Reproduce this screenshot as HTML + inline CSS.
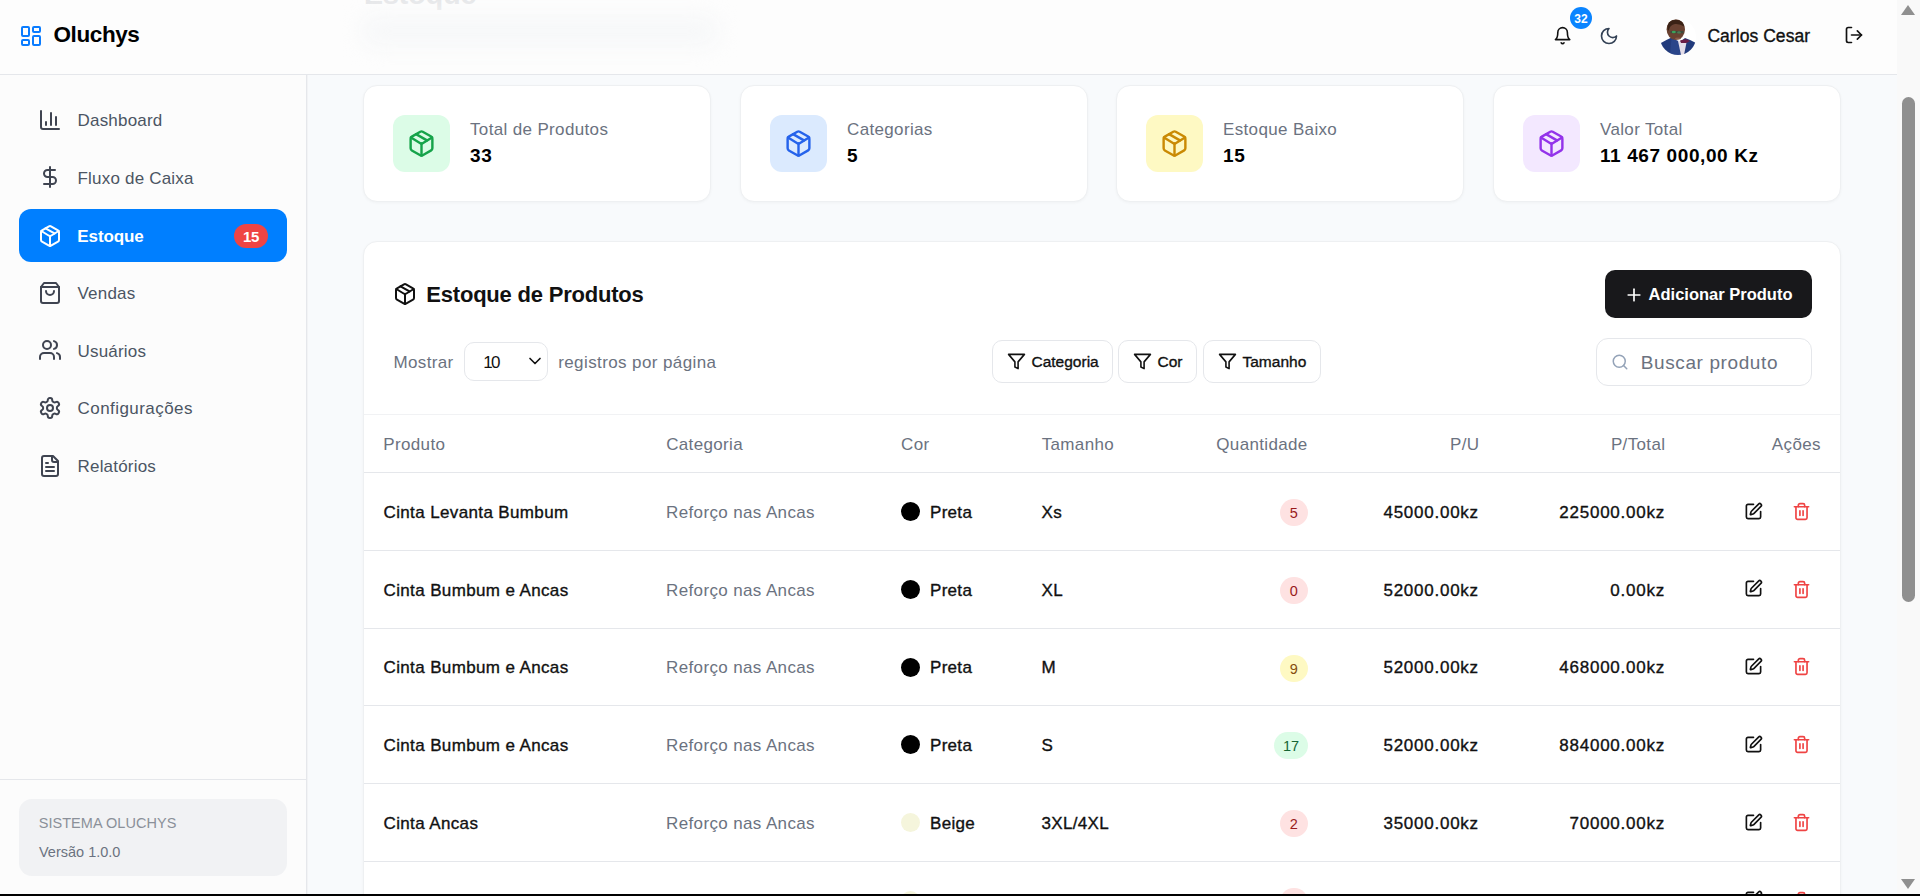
<!DOCTYPE html>
<html><head><meta charset="utf-8">
<style>
*{box-sizing:border-box;margin:0;padding:0}
html,body{width:1920px;height:896px;overflow:hidden}
body{position:relative;background:#f8fafc;font-family:"Liberation Sans",sans-serif;color:#111}
.t{position:absolute;white-space:nowrap;line-height:1}
.r{position:absolute}
.m{-webkit-text-stroke:0.35px currentColor}
svg{fill:none;stroke:currentColor;stroke-linecap:round;stroke-linejoin:round}
</style></head><body>
<div class="r" style="left:0px;top:0px;width:1897px;height:74px;background:#fdfdfd;"></div>
<div class="r" style="left:0px;top:74px;width:1897px;height:1px;background:#e5e7eb;"></div>
<div class="t" style="top:-20.13px;font-size:28.5px;color:#e6e7e9;font-weight:700;left:364px;">Estoque</div>
<div class="r" style="left:360px;top:14px;width:360px;height:34px;border-radius:17px;background:#f7f8f9;filter:blur(10px)"></div>
<svg class="r" style="left:19px;top:24px;color:#0a7cff" width="24" height="24" viewBox="0 0 24 24" stroke-width="2"><rect width="7" height="9" x="3" y="3" rx="1"/><rect width="7" height="5" x="14" y="3" rx="1"/><rect width="7" height="9" x="14" y="12" rx="1"/><rect width="7" height="5" x="3" y="16" rx="1"/></svg>
<div class="t" style="top:24.45px;font-size:22.5px;color:#000;font-weight:700;letter-spacing:-0.4px;left:53.5px;">Oluchys</div>
<svg class="r" style="left:1552.9px;top:25.9px;color:#111" width="19.2" height="19.2" viewBox="0 0 24 24" stroke-width="2"><path d="M6 8a6 6 0 0 1 12 0c0 7 3 9 3 9H3s3-2 3-9"/><path d="M10.3 21a1.94 1.94 0 0 0 3.4 0"/></svg>
<div class="r" style="left:1570px;top:7px;width:22px;height:22px;background:#0a84ff;border-radius:11px;"></div>
<div class="t" style="top:12.54px;font-size:12px;color:#fff;font-weight:700;left:1581px;transform:translateX(-50%);">32</div>
<svg class="r" style="left:1598.5px;top:25.5px;color:#334155" width="20" height="20" viewBox="0 0 24 24" stroke-width="2"><path d="M12 3a6 6 0 0 0 9 9 9 9 0 1 1-9-9Z"/></svg>
<svg class="r" style="left:1660px;top:18.8px" width="36" height="36" viewBox="0 0 36 36">
<defs><clipPath id="av"><circle cx="18" cy="18" r="18"/></clipPath><filter id="bl"><feGaussianBlur stdDeviation="0.5"/></filter></defs>
<g clip-path="url(#av)" style="stroke:none">
<rect width="36" height="36" fill="#fff"/>
<g filter="url(#bl)">
<path d="M0 24.5 Q6 21 11.5 18.5 L16 22 L21 22 L25 19 Q31 21 36 24 L36 36 L0 36Z" fill="#243b7c"/>
<path d="M13 19.5 L21.5 22.5 L27 21 L24 36 L19 36Z" fill="#e4dde8"/>
<path d="M11.5 18.5 L18 22 L21 36 L10 36Z" fill="#2a448a"/>
<path d="M20 21.5 L26 20 L30 22 L26.5 24 L21 24Z" fill="#6a1f45"/>
<ellipse cx="15.8" cy="10.6" rx="9.2" ry="10.4" fill="#6a4232"/>
<path d="M7.4 10 Q6.8 1 15.5 0.8 Q23.5 1 24 7.5 Q20 4.5 15 5 Q10 5.5 8.5 12Z" fill="#3a2418"/>
<rect x="10.5" y="12" width="13" height="2.2" fill="#3c4a3c"/>
<ellipse cx="13.8" cy="13" rx="2" ry="1.3" fill="#3aa35a"/>
<ellipse cx="19" cy="13.4" rx="1.8" ry="1.2" fill="#4f7a55"/>
<ellipse cx="18" cy="19.5" rx="3" ry="1" fill="#8a5a48"/>
</g>
</g></svg>
<div class="t m" style="top:28.29px;font-size:17.5px;color:#111;letter-spacing:0.05px;left:1707.4px;">Carlos Cesar</div>
<svg class="r" style="left:1843.6px;top:25.3px;color:#111" width="20" height="20" viewBox="0 0 24 24" stroke-width="2"><path d="M9 21H5a2 2 0 0 1-2-2V5a2 2 0 0 1 2-2h4"/><polyline points="16 17 21 12 16 7"/><line x1="21" x2="9" y1="12" y2="12"/></svg>
<div class="r" style="left:0px;top:75px;width:306px;height:821px;background:#fcfcfc;"></div>
<div class="r" style="left:306px;top:75px;width:1px;height:821px;background:#e5e7eb;"></div>
<div class="r" style="left:307px;top:75px;width:1px;height:821px;background:#f2f3f5;"></div>
<svg class="r" style="left:38px;top:107.74000000000001px;color:#3f4451" width="24" height="24" viewBox="0 0 24 24" stroke-width="2"><path d="M3 3v16a2 2 0 0 0 2 2h16"/><path d="M18 17V9"/><path d="M13 17V5"/><path d="M8 17v-3"/></svg>
<div class="t" style="top:112.06px;font-size:17px;color:#4b5563;letter-spacing:0.2px;left:77.5px;">Dashboard</div>
<svg class="r" style="left:38px;top:165.37px;color:#3f4451" width="24" height="24" viewBox="0 0 24 24" stroke-width="2"><line x1="12" x2="12" y1="2" y2="22"/><path d="M17 5H9.5a3.5 3.5 0 0 0 0 7h5a3.5 3.5 0 0 1 0 7H6"/></svg>
<div class="t" style="top:169.68px;font-size:17px;color:#4b5563;letter-spacing:0.2px;left:77.5px;">Fluxo de Caixa</div>
<div class="r" style="left:19px;top:209px;width:268px;height:53px;background:#007fff;border-radius:12px;"></div>
<svg class="r" style="left:38px;top:224.10000000000002px;color:#ffffff" width="24" height="24" viewBox="0 0 24 24" stroke-width="2"><path d="M11 21.73a2 2 0 0 0 2 0l7-4A2 2 0 0 0 21 16V8a2 2 0 0 0-1-1.73l-7-4a2 2 0 0 0-2 0l-7 4A2 2 0 0 0 3 8v8a2 2 0 0 0 1 1.73z"/><path d="M12 22V12"/><path d="m3.3 7 7.703 4.734a2 2 0 0 0 1.994 0L20.7 7"/><path d="m7.5 4.27 9 5.15"/></svg>
<div class="t" style="top:227.71px;font-size:17px;color:#fff;font-weight:700;letter-spacing:-0.1px;left:77.3px;">Estoque</div>
<div class="r" style="left:234px;top:224px;width:34px;height:24px;background:#ef4444;border-radius:12px;"></div>
<div class="t" style="top:228.50px;font-size:15px;color:#fff;font-weight:700;letter-spacing:-0.3px;left:251px;transform:translateX(-50%);padding-left:-0.3px;">15</div>
<svg class="r" style="left:38px;top:280.63px;color:#3f4451" width="24" height="24" viewBox="0 0 24 24" stroke-width="2"><path d="M6 2 3 6v14a2 2 0 0 0 2 2h14a2 2 0 0 0 2-2V6l-3-4Z"/><path d="M3 6h18"/><path d="M16 10a4 4 0 0 1-8 0"/></svg>
<div class="t" style="top:284.92px;font-size:17px;color:#4b5563;letter-spacing:0.2px;left:77.5px;">Vendas</div>
<svg class="r" style="left:38px;top:338.26px;color:#3f4451" width="24" height="24" viewBox="0 0 24 24" stroke-width="2"><path d="M16 21v-2a4 4 0 0 0-4-4H6a4 4 0 0 0-4 4v2"/><circle cx="9" cy="7" r="4"/><path d="M22 21v-2a4 4 0 0 0-3-3.87"/><path d="M16 3.13a4 4 0 0 1 0 7.75"/></svg>
<div class="t" style="top:342.54px;font-size:17px;color:#4b5563;letter-spacing:0.2px;left:77.5px;">Usuários</div>
<svg class="r" style="left:38px;top:395.89000000000004px;color:#3f4451" width="24" height="24" viewBox="0 0 24 24" stroke-width="2"><path d="M12.22 2h-.44a2 2 0 0 0-2 2v.18a2 2 0 0 1-1 1.73l-.43.25a2 2 0 0 1-2 0l-.15-.08a2 2 0 0 0-2.73.73l-.22.38a2 2 0 0 0 .73 2.73l.15.1a2 2 0 0 1 1 1.72v.51a2 2 0 0 1-1 1.74l-.15.09a2 2 0 0 0-.73 2.73l.22.38a2 2 0 0 0 2.73.73l.15-.08a2 2 0 0 1 2 0l.43.25a2 2 0 0 1 1 1.73V20a2 2 0 0 0 2 2h.44a2 2 0 0 0 2-2v-.18a2 2 0 0 1 1-1.73l.43-.25a2 2 0 0 1 2 0l.15.08a2 2 0 0 0 2.73-.73l.22-.39a2 2 0 0 0-.73-2.73l-.15-.08a2 2 0 0 1-1-1.74v-.5a2 2 0 0 1 1-1.74l.15-.09a2 2 0 0 0 .73-2.73l-.22-.38a2 2 0 0 0-2.73-.73l-.15.08a2 2 0 0 1-2 0l-.43-.25a2 2 0 0 1-1-1.73V4a2 2 0 0 0-2-2z"/><circle cx="12" cy="12" r="3"/></svg>
<div class="t" style="top:400.16px;font-size:17px;color:#4b5563;letter-spacing:0.45px;left:77.5px;">Configurações</div>
<svg class="r" style="left:38px;top:453.52000000000004px;color:#3f4451" width="24" height="24" viewBox="0 0 24 24" stroke-width="2"><path d="M15 2H6a2 2 0 0 0-2 2v16a2 2 0 0 0 2 2h12a2 2 0 0 0 2-2V7Z"/><path d="M14 2v4a2 2 0 0 0 2 2h4"/><path d="M10 9H8"/><path d="M16 13H8"/><path d="M16 17H8"/></svg>
<div class="t" style="top:457.78px;font-size:17px;color:#4b5563;letter-spacing:0.2px;left:77.5px;">Relatórios</div>
<div class="r" style="left:0px;top:779px;width:306px;height:1px;background:#e5e7eb;"></div>
<div class="r" style="left:19px;top:799px;width:268px;height:77px;background:#f1f2f4;border-radius:13px;"></div>
<div class="t" style="top:815.73px;font-size:14.5px;color:#8b9099;letter-spacing:0.05px;left:38.7px;">SISTEMA OLUCHYS</div>
<div class="t" style="top:845.03px;font-size:14.5px;color:#6b7280;left:39px;">Versão 1.0.0</div>
<div class="r" style="left:363px;top:85px;width:348px;height:117px;background:#fff;border-radius:14px;border:1px solid #eef0f2;box-shadow:0 1px 3px rgba(0,0,0,0.035)"></div>
<div class="r" style="left:393px;top:114.6px;width:57px;height:57px;background:#dcfce7;border-radius:12px;"></div>
<svg class="r" style="left:406.6px;top:128.8px;color:#16a34a" width="29" height="29" viewBox="0 0 24 24" stroke-width="2"><path d="M11 21.73a2 2 0 0 0 2 0l7-4A2 2 0 0 0 21 16V8a2 2 0 0 0-1-1.73l-7-4a2 2 0 0 0-2 0l-7 4A2 2 0 0 0 3 8v8a2 2 0 0 0 1 1.73z"/><path d="M12 22V12"/><path d="m3.3 7 7.703 4.734a2 2 0 0 0 1.994 0L20.7 7"/><path d="m7.5 4.27 9 5.15"/></svg>
<div class="t" style="top:121.21px;font-size:17px;color:#6b7280;letter-spacing:0.35px;left:470px;">Total de Produtos</div>
<div class="t" style="top:145.52px;font-size:19px;color:#000;font-weight:700;letter-spacing:0.6px;left:470px;">33</div>
<div class="r" style="left:740px;top:85px;width:348px;height:117px;background:#fff;border-radius:14px;border:1px solid #eef0f2;box-shadow:0 1px 3px rgba(0,0,0,0.035)"></div>
<div class="r" style="left:770px;top:114.6px;width:57px;height:57px;background:#dbeafe;border-radius:12px;"></div>
<svg class="r" style="left:783.6px;top:128.8px;color:#2563eb" width="29" height="29" viewBox="0 0 24 24" stroke-width="2"><path d="M11 21.73a2 2 0 0 0 2 0l7-4A2 2 0 0 0 21 16V8a2 2 0 0 0-1-1.73l-7-4a2 2 0 0 0-2 0l-7 4A2 2 0 0 0 3 8v8a2 2 0 0 0 1 1.73z"/><path d="M12 22V12"/><path d="m3.3 7 7.703 4.734a2 2 0 0 0 1.994 0L20.7 7"/><path d="m7.5 4.27 9 5.15"/></svg>
<div class="t" style="top:121.21px;font-size:17px;color:#6b7280;letter-spacing:0.35px;left:847px;">Categorias</div>
<div class="t" style="top:145.52px;font-size:19px;color:#000;font-weight:700;letter-spacing:0.6px;left:847px;">5</div>
<div class="r" style="left:1116px;top:85px;width:348px;height:117px;background:#fff;border-radius:14px;border:1px solid #eef0f2;box-shadow:0 1px 3px rgba(0,0,0,0.035)"></div>
<div class="r" style="left:1146px;top:114.6px;width:57px;height:57px;background:#fef9c3;border-radius:12px;"></div>
<svg class="r" style="left:1159.6px;top:128.8px;color:#ca8a04" width="29" height="29" viewBox="0 0 24 24" stroke-width="2"><path d="M11 21.73a2 2 0 0 0 2 0l7-4A2 2 0 0 0 21 16V8a2 2 0 0 0-1-1.73l-7-4a2 2 0 0 0-2 0l-7 4A2 2 0 0 0 3 8v8a2 2 0 0 0 1 1.73z"/><path d="M12 22V12"/><path d="m3.3 7 7.703 4.734a2 2 0 0 0 1.994 0L20.7 7"/><path d="m7.5 4.27 9 5.15"/></svg>
<div class="t" style="top:121.21px;font-size:17px;color:#6b7280;letter-spacing:0.35px;left:1223px;">Estoque Baixo</div>
<div class="t" style="top:145.52px;font-size:19px;color:#000;font-weight:700;letter-spacing:0.6px;left:1223px;">15</div>
<div class="r" style="left:1493px;top:85px;width:348px;height:117px;background:#fff;border-radius:14px;border:1px solid #eef0f2;box-shadow:0 1px 3px rgba(0,0,0,0.035)"></div>
<div class="r" style="left:1523px;top:114.6px;width:57px;height:57px;background:#f3e8ff;border-radius:12px;"></div>
<svg class="r" style="left:1536.6px;top:128.8px;color:#9333ea" width="29" height="29" viewBox="0 0 24 24" stroke-width="2"><path d="M11 21.73a2 2 0 0 0 2 0l7-4A2 2 0 0 0 21 16V8a2 2 0 0 0-1-1.73l-7-4a2 2 0 0 0-2 0l-7 4A2 2 0 0 0 3 8v8a2 2 0 0 0 1 1.73z"/><path d="M12 22V12"/><path d="m3.3 7 7.703 4.734a2 2 0 0 0 1.994 0L20.7 7"/><path d="m7.5 4.27 9 5.15"/></svg>
<div class="t" style="top:121.21px;font-size:17px;color:#6b7280;letter-spacing:0.35px;left:1600px;">Valor Total</div>
<div class="t" style="top:145.52px;font-size:19px;color:#000;font-weight:700;letter-spacing:0.6px;left:1600px;">11 467 000,00 Kz</div>
<div class="r" style="left:363px;top:241px;width:1478px;height:700px;background:#fff;border-radius:14px;border:1px solid #eef0f2;box-shadow:0 1px 3px rgba(0,0,0,0.035)"></div>
<svg class="r" style="left:393px;top:282px;color:#111" width="24" height="24" viewBox="0 0 24 24" stroke-width="2"><path d="M11 21.73a2 2 0 0 0 2 0l7-4A2 2 0 0 0 21 16V8a2 2 0 0 0-1-1.73l-7-4a2 2 0 0 0-2 0l-7 4A2 2 0 0 0 3 8v8a2 2 0 0 0 1 1.73z"/><path d="M12 22V12"/><path d="m3.3 7 7.703 4.734a2 2 0 0 0 1.994 0L20.7 7"/><path d="m7.5 4.27 9 5.15"/></svg>
<div class="t" style="top:283.98px;font-size:22px;color:#111;font-weight:700;letter-spacing:-0.21px;left:426.3px;">Estoque de Produtos</div>
<div class="r" style="left:1605px;top:270px;width:207px;height:48px;background:#18181b;border-radius:10px;"></div>
<svg class="r" style="left:1623.5px;top:284.5px;color:#fff" width="20" height="20" viewBox="0 0 24 24" stroke-width="2"><path d="M5 12h14"/><path d="M12 5v14"/></svg>
<div class="t" style="top:285.63px;font-size:16.5px;color:#fff;font-weight:700;left:1648.6px;">Adicionar Produto</div>
<div class="t" style="top:353.91px;font-size:17px;color:#6b7280;letter-spacing:0.35px;left:393.5px;">Mostrar</div>
<div class="r" style="left:464px;top:342px;width:84px;height:38.5px;background:#fff;border-radius:10px;border:1px solid #e5e7eb"></div>
<div class="t" style="top:353.91px;font-size:17px;color:#111;letter-spacing:-1.8px;left:483.3px;">10</div>
<svg class="r" style="left:525.1px;top:351.3px;color:#111" width="20" height="20" viewBox="0 0 24 24" stroke-width="2"><path d="m6 9 6 6 6-6"/></svg>
<div class="t" style="top:353.91px;font-size:17px;color:#6b7280;letter-spacing:0.4px;left:558.2px;">registros por página</div>
<div class="r" style="left:992px;top:340px;width:121px;height:42.5px;background:#fff;border-radius:10px;border:1px solid #e5e7eb"></div>
<svg class="r" style="left:1007px;top:351.5px;color:#111" width="19" height="19" viewBox="0 0 24 24" stroke-width="2"><polygon points="22 3 2 3 10 12.46 10 19 14 21 14 12.46 22 3"/></svg>
<div class="t m" style="top:354.28px;font-size:15.5px;color:#111;left:1031.5px;">Categoria</div>
<div class="r" style="left:1118px;top:340px;width:79px;height:42.5px;background:#fff;border-radius:10px;border:1px solid #e5e7eb"></div>
<svg class="r" style="left:1133px;top:351.5px;color:#111" width="19" height="19" viewBox="0 0 24 24" stroke-width="2"><polygon points="22 3 2 3 10 12.46 10 19 14 21 14 12.46 22 3"/></svg>
<div class="t m" style="top:354.28px;font-size:15.5px;color:#111;left:1157.5px;">Cor</div>
<div class="r" style="left:1203px;top:340px;width:118px;height:42.5px;background:#fff;border-radius:10px;border:1px solid #e5e7eb"></div>
<svg class="r" style="left:1218px;top:351.5px;color:#111" width="19" height="19" viewBox="0 0 24 24" stroke-width="2"><polygon points="22 3 2 3 10 12.46 10 19 14 21 14 12.46 22 3"/></svg>
<div class="t m" style="top:354.28px;font-size:15.5px;color:#111;left:1242.5px;">Tamanho</div>
<div class="r" style="left:1596px;top:338px;width:216px;height:48px;background:#fff;border-radius:12px;border:1px solid #e5e7eb"></div>
<svg class="r" style="left:1610.5px;top:352.5px;color:#94a3b8" width="18" height="18" viewBox="0 0 24 24" stroke-width="2"><circle cx="11" cy="11" r="8"/><path d="m21 21-4.3-4.3"/></svg>
<div class="t" style="top:352.82px;font-size:19px;color:#6b7280;letter-spacing:0.6px;left:1640.8px;">Buscar produto</div>
<div class="r" style="left:364px;top:414px;width:1476px;height:1px;background:#f1f2f4;"></div>
<div class="r" style="left:364px;top:472px;width:1476px;height:1px;background:#e5e7eb;"></div>
<div class="t" style="top:436.21px;font-size:17px;color:#6b7280;letter-spacing:0.35px;left:383.3px;">Produto</div>
<div class="t" style="top:436.21px;font-size:17px;color:#6b7280;letter-spacing:0.35px;left:666.2px;">Categoria</div>
<div class="t" style="top:436.21px;font-size:17px;color:#6b7280;letter-spacing:0.35px;left:901px;">Cor</div>
<div class="t" style="top:436.21px;font-size:17px;color:#6b7280;letter-spacing:0.35px;left:1041.7px;">Tamanho</div>
<div class="t" style="top:436.21px;font-size:17px;color:#6b7280;letter-spacing:0.35px;right:612.7px;margin-right:-0.35px;">Quantidade</div>
<div class="t" style="top:436.21px;font-size:17px;color:#6b7280;letter-spacing:0.35px;right:441px;margin-right:-0.35px;">P/U</div>
<div class="t" style="top:436.21px;font-size:17px;color:#6b7280;letter-spacing:0.35px;right:255px;margin-right:-0.35px;">P/Total</div>
<div class="t" style="top:436.21px;font-size:17px;color:#6b7280;letter-spacing:0.35px;right:99.5px;margin-right:-0.35px;">Ações</div>
<div class="t m" style="top:503.91px;font-size:17px;color:#111;letter-spacing:0.37px;left:383.5px;">Cinta Levanta Bumbum</div>
<div class="t" style="top:503.91px;font-size:17px;color:#6b7280;letter-spacing:0.37px;left:666px;">Reforço nas Ancas</div>
<div class="r" style="left:901px;top:502.0px;width:19px;height:19px;background:#000;border-radius:9.5px;"></div>
<div class="t m" style="top:503.91px;font-size:17px;color:#111;letter-spacing:0.3px;left:930px;">Preta</div>
<div class="t m" style="top:503.91px;font-size:17px;color:#111;letter-spacing:0.3px;left:1041.6px;">Xs</div>
<div class="r" style="left:1279.9px;top:499.0px;width:28px;height:27px;background:#fee2e2;border-radius:13.5px;"></div>
<div class="t" style="top:506.23px;font-size:14.5px;color:#991b1b;left:1293.9px;transform:translateX(-50%);">5</div>
<div class="t m" style="top:503.91px;font-size:17px;color:#111;letter-spacing:0.75px;right:441.9000000000001px;margin-right:-0.75px;">45000.00kz</div>
<div class="t m" style="top:503.91px;font-size:17px;color:#111;letter-spacing:0.75px;right:255.79999999999995px;margin-right:-0.75px;">225000.00kz</div>
<svg class="r" style="left:1744.1px;top:501.6px;color:#111" width="19" height="19" viewBox="0 0 24 24" stroke-width="2.1"><path d="M12 3H5a2 2 0 0 0-2 2v14a2 2 0 0 0 2 2h14a2 2 0 0 0 2-2v-7"/><path d="M18.375 2.625a1 1 0 0 1 3 3l-9.013 9.014a2 2 0 0 1-.853.505l-2.873.84a.5.5 0 0 1-.62-.62l.84-2.873a2 2 0 0 1 .506-.852z"/></svg>
<svg class="r" style="left:1792px;top:501.9px;color:#ef4444" width="19" height="19" viewBox="0 0 24 24" stroke-width="2.1"><path d="M3 6h18"/><path d="M19 6v14c0 1-1 2-2 2H7c-1 0-2-1-2-2V6"/><path d="M8 6V4c0-1 1-2 2-2h4c1 0 2 1 2 2v2"/><line x1="10" x2="10" y1="11" y2="17"/><line x1="14" x2="14" y1="11" y2="17"/></svg>
<div class="r" style="left:364px;top:550px;width:1476px;height:1px;background:#e5e7eb;"></div>
<div class="t m" style="top:581.66px;font-size:17px;color:#111;letter-spacing:0.37px;left:383.5px;">Cinta Bumbum e Ancas</div>
<div class="t" style="top:581.66px;font-size:17px;color:#6b7280;letter-spacing:0.37px;left:666px;">Reforço nas Ancas</div>
<div class="r" style="left:901px;top:579.75px;width:19px;height:19px;background:#000;border-radius:9.5px;"></div>
<div class="t m" style="top:581.66px;font-size:17px;color:#111;letter-spacing:0.3px;left:930px;">Preta</div>
<div class="t m" style="top:581.66px;font-size:17px;color:#111;letter-spacing:0.3px;left:1041.6px;">XL</div>
<div class="r" style="left:1279.9px;top:576.75px;width:28px;height:27px;background:#fee2e2;border-radius:13.5px;"></div>
<div class="t" style="top:583.98px;font-size:14.5px;color:#991b1b;left:1293.9px;transform:translateX(-50%);">0</div>
<div class="t m" style="top:581.66px;font-size:17px;color:#111;letter-spacing:0.75px;right:441.9000000000001px;margin-right:-0.75px;">52000.00kz</div>
<div class="t m" style="top:581.66px;font-size:17px;color:#111;letter-spacing:0.75px;right:255.79999999999995px;margin-right:-0.75px;">0.00kz</div>
<svg class="r" style="left:1744.1px;top:579.35px;color:#111" width="19" height="19" viewBox="0 0 24 24" stroke-width="2.1"><path d="M12 3H5a2 2 0 0 0-2 2v14a2 2 0 0 0 2 2h14a2 2 0 0 0 2-2v-7"/><path d="M18.375 2.625a1 1 0 0 1 3 3l-9.013 9.014a2 2 0 0 1-.853.505l-2.873.84a.5.5 0 0 1-.62-.62l.84-2.873a2 2 0 0 1 .506-.852z"/></svg>
<svg class="r" style="left:1792px;top:579.65px;color:#ef4444" width="19" height="19" viewBox="0 0 24 24" stroke-width="2.1"><path d="M3 6h18"/><path d="M19 6v14c0 1-1 2-2 2H7c-1 0-2-1-2-2V6"/><path d="M8 6V4c0-1 1-2 2-2h4c1 0 2 1 2 2v2"/><line x1="10" x2="10" y1="11" y2="17"/><line x1="14" x2="14" y1="11" y2="17"/></svg>
<div class="r" style="left:364px;top:628px;width:1476px;height:1px;background:#e5e7eb;"></div>
<div class="t m" style="top:659.41px;font-size:17px;color:#111;letter-spacing:0.37px;left:383.5px;">Cinta Bumbum e Ancas</div>
<div class="t" style="top:659.41px;font-size:17px;color:#6b7280;letter-spacing:0.37px;left:666px;">Reforço nas Ancas</div>
<div class="r" style="left:901px;top:657.5px;width:19px;height:19px;background:#000;border-radius:9.5px;"></div>
<div class="t m" style="top:659.41px;font-size:17px;color:#111;letter-spacing:0.3px;left:930px;">Preta</div>
<div class="t m" style="top:659.41px;font-size:17px;color:#111;letter-spacing:0.3px;left:1041.6px;">M</div>
<div class="r" style="left:1279.9px;top:654.5px;width:28px;height:27px;background:#fef9c3;border-radius:13.5px;"></div>
<div class="t" style="top:661.73px;font-size:14.5px;color:#854d0e;left:1293.9px;transform:translateX(-50%);">9</div>
<div class="t m" style="top:659.41px;font-size:17px;color:#111;letter-spacing:0.75px;right:441.9000000000001px;margin-right:-0.75px;">52000.00kz</div>
<div class="t m" style="top:659.41px;font-size:17px;color:#111;letter-spacing:0.75px;right:255.79999999999995px;margin-right:-0.75px;">468000.00kz</div>
<svg class="r" style="left:1744.1px;top:657.1px;color:#111" width="19" height="19" viewBox="0 0 24 24" stroke-width="2.1"><path d="M12 3H5a2 2 0 0 0-2 2v14a2 2 0 0 0 2 2h14a2 2 0 0 0 2-2v-7"/><path d="M18.375 2.625a1 1 0 0 1 3 3l-9.013 9.014a2 2 0 0 1-.853.505l-2.873.84a.5.5 0 0 1-.62-.62l.84-2.873a2 2 0 0 1 .506-.852z"/></svg>
<svg class="r" style="left:1792px;top:657.4px;color:#ef4444" width="19" height="19" viewBox="0 0 24 24" stroke-width="2.1"><path d="M3 6h18"/><path d="M19 6v14c0 1-1 2-2 2H7c-1 0-2-1-2-2V6"/><path d="M8 6V4c0-1 1-2 2-2h4c1 0 2 1 2 2v2"/><line x1="10" x2="10" y1="11" y2="17"/><line x1="14" x2="14" y1="11" y2="17"/></svg>
<div class="r" style="left:364px;top:705px;width:1476px;height:1px;background:#e5e7eb;"></div>
<div class="t m" style="top:737.16px;font-size:17px;color:#111;letter-spacing:0.37px;left:383.5px;">Cinta Bumbum e Ancas</div>
<div class="t" style="top:737.16px;font-size:17px;color:#6b7280;letter-spacing:0.37px;left:666px;">Reforço nas Ancas</div>
<div class="r" style="left:901px;top:735.25px;width:19px;height:19px;background:#000;border-radius:9.5px;"></div>
<div class="t m" style="top:737.16px;font-size:17px;color:#111;letter-spacing:0.3px;left:930px;">Preta</div>
<div class="t m" style="top:737.16px;font-size:17px;color:#111;letter-spacing:0.3px;left:1041.6px;">S</div>
<div class="r" style="left:1274.3000000000002px;top:732.25px;width:33.6px;height:27px;background:#dcfce7;border-radius:13.5px;"></div>
<div class="t" style="top:739.48px;font-size:14.5px;color:#166534;left:1291.1000000000001px;transform:translateX(-50%);">17</div>
<div class="t m" style="top:737.16px;font-size:17px;color:#111;letter-spacing:0.75px;right:441.9000000000001px;margin-right:-0.75px;">52000.00kz</div>
<div class="t m" style="top:737.16px;font-size:17px;color:#111;letter-spacing:0.75px;right:255.79999999999995px;margin-right:-0.75px;">884000.00kz</div>
<svg class="r" style="left:1744.1px;top:734.85px;color:#111" width="19" height="19" viewBox="0 0 24 24" stroke-width="2.1"><path d="M12 3H5a2 2 0 0 0-2 2v14a2 2 0 0 0 2 2h14a2 2 0 0 0 2-2v-7"/><path d="M18.375 2.625a1 1 0 0 1 3 3l-9.013 9.014a2 2 0 0 1-.853.505l-2.873.84a.5.5 0 0 1-.62-.62l.84-2.873a2 2 0 0 1 .506-.852z"/></svg>
<svg class="r" style="left:1792px;top:735.15px;color:#ef4444" width="19" height="19" viewBox="0 0 24 24" stroke-width="2.1"><path d="M3 6h18"/><path d="M19 6v14c0 1-1 2-2 2H7c-1 0-2-1-2-2V6"/><path d="M8 6V4c0-1 1-2 2-2h4c1 0 2 1 2 2v2"/><line x1="10" x2="10" y1="11" y2="17"/><line x1="14" x2="14" y1="11" y2="17"/></svg>
<div class="r" style="left:364px;top:783px;width:1476px;height:1px;background:#e5e7eb;"></div>
<div class="t m" style="top:814.91px;font-size:17px;color:#111;letter-spacing:0.37px;left:383.5px;">Cinta Ancas</div>
<div class="t" style="top:814.91px;font-size:17px;color:#6b7280;letter-spacing:0.37px;left:666px;">Reforço nas Ancas</div>
<div class="r" style="left:901px;top:813.0px;width:19px;height:19px;background:#f5f5dc;border-radius:9.5px;"></div>
<div class="t m" style="top:814.91px;font-size:17px;color:#111;letter-spacing:0.3px;left:930px;">Beige</div>
<div class="t m" style="top:814.91px;font-size:17px;color:#111;letter-spacing:0.3px;left:1041.6px;">3XL/4XL</div>
<div class="r" style="left:1279.9px;top:810.0px;width:28px;height:27px;background:#fee2e2;border-radius:13.5px;"></div>
<div class="t" style="top:817.23px;font-size:14.5px;color:#991b1b;left:1293.9px;transform:translateX(-50%);">2</div>
<div class="t m" style="top:814.91px;font-size:17px;color:#111;letter-spacing:0.75px;right:441.9000000000001px;margin-right:-0.75px;">35000.00kz</div>
<div class="t m" style="top:814.91px;font-size:17px;color:#111;letter-spacing:0.75px;right:255.79999999999995px;margin-right:-0.75px;">70000.00kz</div>
<svg class="r" style="left:1744.1px;top:812.6px;color:#111" width="19" height="19" viewBox="0 0 24 24" stroke-width="2.1"><path d="M12 3H5a2 2 0 0 0-2 2v14a2 2 0 0 0 2 2h14a2 2 0 0 0 2-2v-7"/><path d="M18.375 2.625a1 1 0 0 1 3 3l-9.013 9.014a2 2 0 0 1-.853.505l-2.873.84a.5.5 0 0 1-.62-.62l.84-2.873a2 2 0 0 1 .506-.852z"/></svg>
<svg class="r" style="left:1792px;top:812.9px;color:#ef4444" width="19" height="19" viewBox="0 0 24 24" stroke-width="2.1"><path d="M3 6h18"/><path d="M19 6v14c0 1-1 2-2 2H7c-1 0-2-1-2-2V6"/><path d="M8 6V4c0-1 1-2 2-2h4c1 0 2 1 2 2v2"/><line x1="10" x2="10" y1="11" y2="17"/><line x1="14" x2="14" y1="11" y2="17"/></svg>
<div class="r" style="left:364px;top:861px;width:1476px;height:1px;background:#e5e7eb;"></div>
<div class="t m" style="top:892.66px;font-size:17px;color:#111;letter-spacing:0.37px;left:383.5px;">Cinta Ancas</div>
<div class="t" style="top:892.66px;font-size:17px;color:#6b7280;letter-spacing:0.37px;left:666px;">Reforço nas Ancas</div>
<div class="r" style="left:901px;top:890.75px;width:19px;height:19px;background:#f5f5dc;border-radius:9.5px;"></div>
<div class="t m" style="top:892.66px;font-size:17px;color:#111;letter-spacing:0.3px;left:930px;">Beige</div>
<div class="t m" style="top:892.66px;font-size:17px;color:#111;letter-spacing:0.3px;left:1041.6px;">3XL/4XL</div>
<div class="r" style="left:1279.9px;top:887.75px;width:28px;height:27px;background:#fee2e2;border-radius:13.5px;"></div>
<div class="t" style="top:894.98px;font-size:14.5px;color:#991b1b;left:1293.9px;transform:translateX(-50%);">2</div>
<div class="t m" style="top:892.66px;font-size:17px;color:#111;letter-spacing:0.75px;right:441.9000000000001px;margin-right:-0.75px;">35000.00kz</div>
<div class="t m" style="top:892.66px;font-size:17px;color:#111;letter-spacing:0.75px;right:255.79999999999995px;margin-right:-0.75px;">70000.00kz</div>
<svg class="r" style="left:1744.1px;top:890.35px;color:#111" width="19" height="19" viewBox="0 0 24 24" stroke-width="2.1"><path d="M12 3H5a2 2 0 0 0-2 2v14a2 2 0 0 0 2 2h14a2 2 0 0 0 2-2v-7"/><path d="M18.375 2.625a1 1 0 0 1 3 3l-9.013 9.014a2 2 0 0 1-.853.505l-2.873.84a.5.5 0 0 1-.62-.62l.84-2.873a2 2 0 0 1 .506-.852z"/></svg>
<svg class="r" style="left:1792px;top:890.65px;color:#ef4444" width="19" height="19" viewBox="0 0 24 24" stroke-width="2.1"><path d="M3 6h18"/><path d="M19 6v14c0 1-1 2-2 2H7c-1 0-2-1-2-2V6"/><path d="M8 6V4c0-1 1-2 2-2h4c1 0 2 1 2 2v2"/><line x1="10" x2="10" y1="11" y2="17"/><line x1="14" x2="14" y1="11" y2="17"/></svg>
<div class="r" style="left:1897px;top:0px;width:23px;height:896px;background:#f9f9f9;"></div>
<div class="r" style="left:1901px;top:5px;width:0;height:0;border-left:7.5px solid transparent;border-right:7.5px solid transparent;border-bottom:10px solid #8f8f8f"></div>
<div class="r" style="left:1902px;top:97px;width:13px;height:505px;background:#8f8f8f;border-radius:6.5px;"></div>
<div class="r" style="left:1901px;top:879px;width:0;height:0;border-left:7.5px solid transparent;border-right:7.5px solid transparent;border-top:10px solid #8f8f8f"></div>
<div class="r" style="left:0px;top:894px;width:1920px;height:2px;background:#000;"></div>
</body></html>
